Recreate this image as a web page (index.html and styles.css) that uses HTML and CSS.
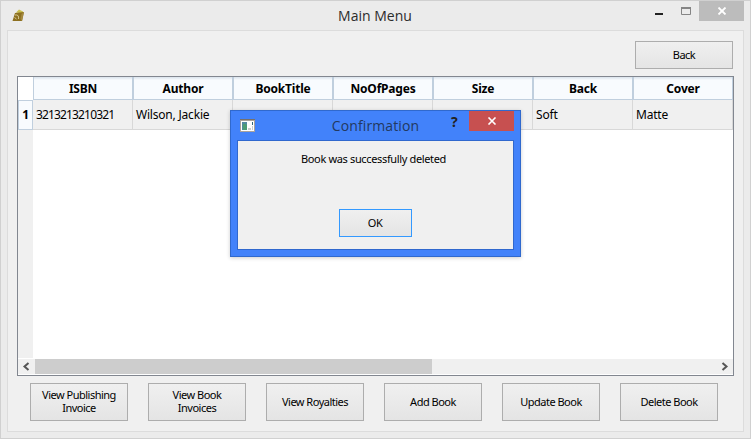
FILE: index.html
```
<!DOCTYPE html>
<html lang="en">
<head>
<meta charset="utf-8">
<title>Main Menu</title>
<link rel="stylesheet" href="styles.css">
</head>
<body>
<div class="window">
  <header class="titlebar">
    <svg class="app-icon" width="14" height="14" viewBox="0 0 14 14"><path d="M4 3.500 7 .5l4 2v2z" fill="#c9c050"/><path d="M3 4 12 3 10 12 .5 12z" fill="#8d7020"/><path d="M12 3 10 12l-1.500-2 1-5z" fill="#a58a40"/><path d="M3 6c3-.5 4 1 3.500 4M2.500 8.500l2 1.500" stroke="#d6c890" fill="none"/></svg>
    <h1>Main Menu</h1>
    <div class="controls">
      <svg width="50" height="20"><path d="M6 13h8v2H6z" fill="#222"/><path d="M32.500 7.500h9v7h-9z" fill="none" stroke="#858585"/><path d="M32 7h10v2H32z" fill="#858585"/></svg>
      <button class="close"><svg width="10" height="8"><path d="m1.500 .5 7 7m0-7-7 7" stroke="#fff" stroke-width="1.800"/></svg></button>
    </div>
  </header>
  <main class="client">
    <div class="top"><button class="btn back">Back</button></div>
    <section class="grid">
      <div class="row head">
        <div class="corner"></div><div>ISBN</div><div>Author</div><div>BookTitle</div><div>NoOfPages</div><div>Size</div><div>Back</div><div>Cover</div>
      </div>
      <div class="row data">
        <div class="num">1</div><div class="digits">3213213210321</div><div>Wilson, Jackie</div><div></div><div></div><div></div><div>Soft</div><div>Matte</div>
      </div>
      <div class="blank"></div>
      <div class="scroll">
        <svg width="17" height="15"><path d="M10.500 4 6.500 7.500l4 3.500" fill="none" stroke="#555" stroke-width="2"/></svg>
        <div class="thumb"></div>
        <svg width="17" height="15"><path d="m6.500 4 4 3.500-4 3.500" fill="none" stroke="#555" stroke-width="2"/></svg>
      </div>
    </section>
    <nav class="actions">
      <button class="btn">View Publishing<br>Invoice</button>
      <button class="btn">View Book<br>Invoices</button>
      <button class="btn">View Royalties</button>
      <button class="btn">Add Book</button>
      <button class="btn">Update Book</button>
      <button class="btn">Delete Book</button>
    </nav>
  </main>
</div>
<div class="dialog">
  <div class="dialog-bar">
    <svg class="dialog-icon" width="15" height="13"><path d="M0 0h15v13H0z" fill="#aaa39c"/><path d="M0 0h15v1H0z" fill="#77706a"/><path d="M1 2h13v10H1z" fill="#fff"/><path d="M2 3h5v8H2z" fill="#528aa0"/><path d="M3 5h3l1 2v4H3z" fill="#4d9c75"/><path d="M8 9h3v2H8zM12 7h1v4h-1z" fill="#ccc"/><path d="M12 3h1v3h-1z" fill="#367"/></svg>
    <h2>Confirmation</h2>
    <span class="help">?</span>
    <button class="close red"><svg width="10" height="8"><path d="m1.500 .5 7 7m0-7-7 7" stroke="#fff" stroke-width="1.600"/></svg></button>
  </div>
  <div class="dialog-body">
    <p>Book was successfully deleted</p>
    <button class="btn ok">OK</button>
  </div>
</div>
</body>
</html>
```
FILE: styles.css
```
* { box-sizing: border-box; }
body { margin: 0; font: 11px/13px "Noto Sans", sans-serif; color: #000; overflow: hidden; }
h1, h2, p { margin: 0; font-weight: 400; }
button { font: inherit; color: inherit; padding: 0; border: 0; }
svg { display: block; flex: none; }
.window { width: 751px; height: 439px; background: #ebebeb; border: 1px solid #d0d0d0; padding: 0 6px; }
.titlebar { position: relative; height: 29px; }
.app-icon { position: absolute; left: 5px; top: 8px; }
h1 { font: 14px/29px "Open Sans", sans-serif; text-align: center; color: #2b2b2b; padding-right: 1px; }
.controls { position: absolute; right: 0; top: 0; display: flex; }
.controls > svg { margin-top: -1px; }
.close { width: 45px; height: 20px; background: #bcbcbc; display: flex; align-items: center; justify-content: center; }
.client { height: 402px; border: 1px solid #dcdcdc; background: #f0f0f0; padding: 10px 9px 0; }
.top { display: flex; justify-content: flex-end; height: 35px; padding-right: 1px; }
.btn { border: 1px solid #adadad; background: linear-gradient(#f0f0f0, #e4e4e4) border-box; width: 98px; height: 38px; padding-bottom: 2px; letter-spacing: -.5px; white-space: nowrap; }
.btn.back { height: 28px; }
.grid { width: 717px; height: 300px; border: 1px solid #828790; background: #fff; display: flex; flex-direction: column; }
.row { display: grid; grid-template-columns: 15px repeat(7, 100px); }
.head { height: 23px; font: bold 12px/24px "Noto Sans", sans-serif; letter-spacing: -.2px; text-align: center; }
.head div { height: 23px; border: solid #c0cfde; border-width: 0 1px 1px; background: linear-gradient(#dae3ec, #f8fbfe 3px); }
.head .corner { border: 0; background: #fff; }
.data { height: 30px; font-size: 12px; line-height: 30px; background: #f0f0f0; }
.data div { height: 30px; border: solid #d8d8d8; border-width: 0 1px 1px 0; padding-left: 3px; letter-spacing: -.2px; }
.data .digits { letter-spacing: -.85px; }
.data .num { border: 1px solid #c0cfde; background: #f8fbfe; padding: 0; text-align: center; font-weight: 700; line-height: 28px; }
.blank { width: 15px; height: 228px; background: #f0f0f0; }
.scroll { display: flex; margin-top: 1px; height: 15px; background: #f0f0f0; }
.thumb { width: 397px; background: #cdcdcd; margin-right: auto; }
.actions { display: flex; gap: 20px; padding: 7px 0 0 13px; }
.dialog { position: absolute; left: 230px; top: 110px; width: 291px; height: 147px; border: 1px solid #3069cd; background: #4282fa; padding: 0 6px; box-shadow: 0 1px 4px #0003; }
.dialog-bar { position: relative; height: 29px; }
h2 { font: 14px/30px "Open Sans", sans-serif; letter-spacing: .1px; text-align: center; color: #23395f; }
.dialog-icon { position: absolute; left: 3px; top: 8px; }
.help { position: absolute; left: 214px; top: 3px; font: bold 14px/15px "Noto Sans", sans-serif; color: #222; }
.close.red { position: absolute; right: 0; top: 0; background: #c75050; }
.dialog-body { height: 110px; border: 1px solid #3068ce; background: #f0f0f0; display: flex; flex-direction: column; align-items: center; padding-top: 11px; }
.dialog-body p { letter-spacing: -.35px; padding-right: 4px; }
.btn.ok { width: 73px; height: 28px; margin: 44px 1px 0 0; border-color: #3399ff; }
```
